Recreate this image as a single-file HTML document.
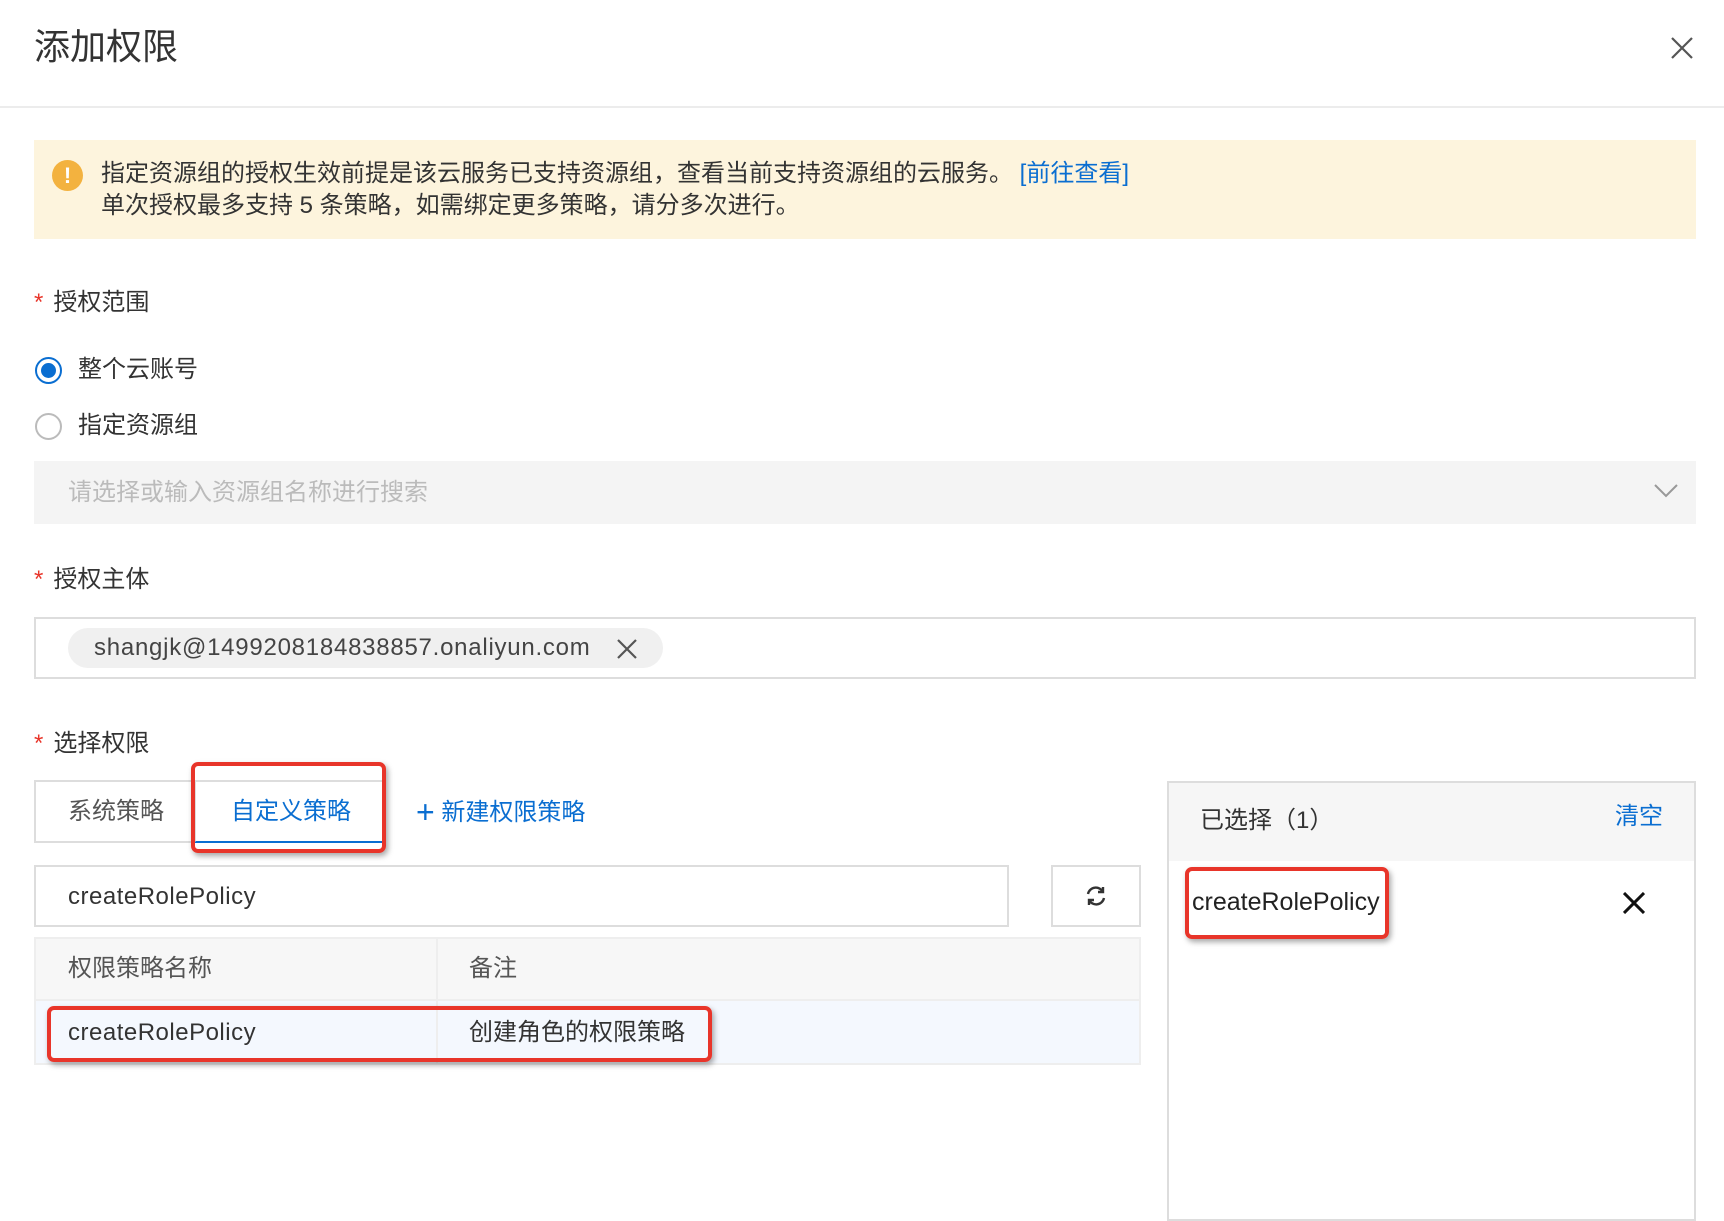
<!DOCTYPE html>
<html><head><meta charset="utf-8"><style>
*{margin:0;padding:0;box-sizing:border-box}
body{width:1724px;height:1216px;background:#fff;position:relative;overflow:hidden;font-family:"Liberation Sans","Noto Sans CJK SC",sans-serif;color:#333}
.a{position:absolute;white-space:nowrap}
.t{font-size:24px;line-height:24px}
.l{letter-spacing:0.5px}
.red{position:absolute;border:4px solid #e8352a;border-radius:7px;box-shadow:2px 3px 6px rgba(0,0,0,.35)}
.s{color:#e8352a;margin-right:10px}
</style></head><body>
<div class="a" style="left:34px;top:27px;font-size:36px;line-height:40px;color:#333">添加权限</div>
<svg class="a" style="left:1671px;top:37px" width="22" height="22" viewBox="0 0 22 22"><path d="M1 1L21 21M21 1L1 21" stroke="#555" stroke-width="2.2"/></svg>
<div class="a" style="left:0;top:106px;width:1724px;height:2px;background:#ececec"></div>

<div class="a" style="left:34px;top:140px;width:1662px;height:99px;background:#fdf4dd"></div>
<div class="a" style="left:52px;top:160px;width:31px;height:31px;border-radius:50%;background:#f3b23f;color:#fff;font-weight:bold;font-size:22px;line-height:31px;text-align:center">!</div>
<div class="a t" style="left:101px;top:162px;color:#333">指定资源组的授权生效前提是该云服务已支持资源组，查看当前支持资源组的云服务。 <span style="color:#0a6ed1">[前往查看]</span></div>
<div class="a t" style="left:101px;top:194px;color:#333">单次授权最多支持 5 条策略，如需绑定更多策略，请分多次进行。</div>

<div class="a t" style="left:34px;top:291px"><span class="s">*</span>授权范围</div>
<div class="a" style="left:35px;top:357px;width:27px;height:27px;border-radius:50%;border:2px solid #0a6ed1"></div>
<div class="a" style="left:41px;top:363px;width:15px;height:15px;border-radius:50%;background:#0a6ed1"></div>
<div class="a t" style="left:78px;top:358px">整个云账号</div>
<div class="a" style="left:35px;top:413px;width:27px;height:27px;border-radius:50%;border:2px solid #bbb"></div>
<div class="a t" style="left:78px;top:414px">指定资源组</div>
<div class="a" style="left:34px;top:461px;width:1662px;height:63px;background:#f4f4f4"></div>
<div class="a t" style="left:68px;top:481px;color:#bbb">请选择或输入资源组名称进行搜索</div>
<svg class="a" style="left:1654px;top:484px" width="24" height="14" viewBox="0 0 24 14"><path d="M1 1L12 12L23 1" stroke="#999" stroke-width="2" fill="none"/></svg>

<div class="a t" style="left:34px;top:568px"><span class="s">*</span>授权主体</div>
<div class="a" style="left:34px;top:617px;width:1662px;height:62px;border:2px solid #ddd"></div>
<div class="a" style="left:68px;top:628px;width:595px;height:40px;border-radius:20px;background:#f0f0f0"></div>
<div class="a t" style="left:94px;top:636px;color:#444;letter-spacing:0.75px">shangjk@1499208184838857.onaliyun.com</div>
<svg class="a" style="left:617px;top:639px" width="20" height="20" viewBox="0 0 20 20"><path d="M1 1L19 19M19 1L1 19" stroke="#555" stroke-width="2.2"/></svg>

<div class="a t" style="left:34px;top:732px"><span class="s">*</span>选择权限</div>
<div class="a" style="left:34px;top:780px;width:352px;height:63px;border:2px solid #ddd"></div>
<div class="a t" style="left:68px;top:800px;color:#555">系统策略</div>
<div class="a" style="left:194px;top:780px;width:188px;height:63px;border-left:2px solid #ddd;border-bottom:2px solid #0a6ed1"></div>
<div class="a t" style="left:231px;top:800px;color:#0a6ed1">自定义策略</div>
<div class="red" style="left:191px;top:762px;width:195px;height:91px"></div>
<div class="a t" style="left:416px;top:800px;color:#0a6ed1"><span style="font-size:32px;vertical-align:-3px">+</span> 新建权限策略</div>

<div class="a" style="left:34px;top:865px;width:975px;height:62px;border:2px solid #ddd"></div>
<div class="a t l" style="left:68px;top:885px;color:#333">createRolePolicy</div>
<div class="a" style="left:1051px;top:865px;width:90px;height:62px;border:2px solid #ddd"></div>
<svg class="a" style="left:1084px;top:884px" width="24" height="24" viewBox="0 0 24 24" fill="none" stroke="#333" stroke-width="2.4"><path d="M4 10A8 8 0 0 1 19 8M20 14A8 8 0 0 1 5 16"/><path d="M19 3V8H14M5 21V16H10"/></svg>

<div class="a" style="left:34px;top:937px;width:1107px;height:128px;border:2px solid #eee"></div>
<div class="a" style="left:36px;top:939px;width:1103px;height:62px;background:#f7f7f7;border-bottom:2px solid #eee"></div>
<div class="a" style="left:36px;top:1001px;width:1103px;height:62px;background:#f4f8fe"></div>
<div class="a" style="left:436px;top:939px;width:2px;height:124px;background:#eee"></div>
<div class="a t" style="left:68px;top:957px;color:#555">权限策略名称</div>
<div class="a t" style="left:469px;top:957px;color:#555">备注</div>
<div class="a t l" style="left:68px;top:1021px;color:#333">createRolePolicy</div>
<div class="a t" style="left:469px;top:1021px;color:#333">创建角色的权限策略</div>
<div class="red" style="left:47px;top:1006px;width:665px;height:56px"></div>

<div class="a" style="left:1167px;top:781px;width:529px;height:440px;border:2px solid #ddd"></div>
<div class="a" style="left:1169px;top:783px;width:525px;height:78px;background:#f6f6f6"></div>
<div class="a t" style="left:1200px;top:809px;color:#333">已选择（1）</div>
<div class="a t" style="left:1615px;top:805px;color:#0a6ed1">清空</div>
<div class="a" style="left:1192px;top:890px;font-size:25px;line-height:25px;color:#222">createRolePolicy</div>
<div class="red" style="left:1185px;top:867px;width:204px;height:72px"></div>
<svg class="a" style="left:1623px;top:892px" width="22" height="22" viewBox="0 0 22 22"><path d="M1 1L21 21M21 1L1 21" stroke="#111" stroke-width="3"/></svg>
</body></html>
